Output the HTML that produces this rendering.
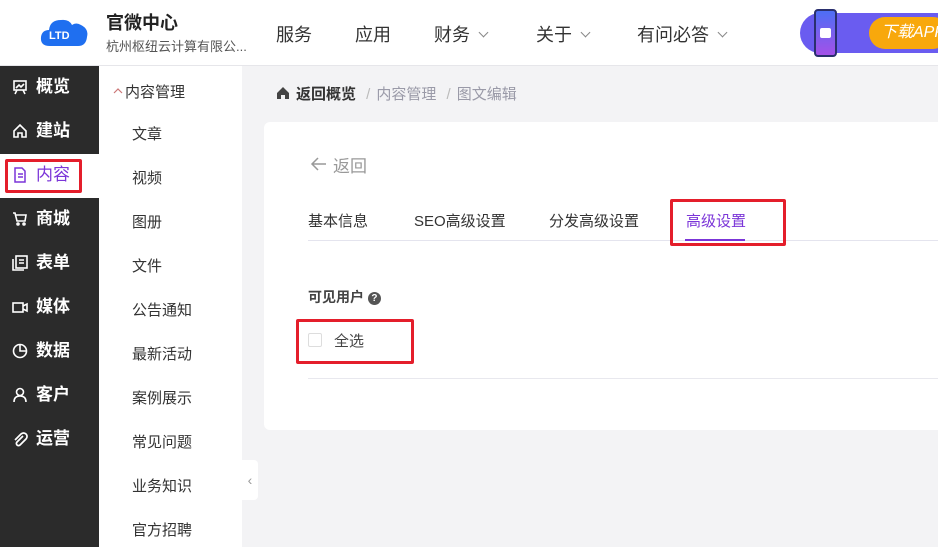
<!DOCTYPE html><html><head><meta charset="utf-8"><style>
*{margin:0;padding:0;box-sizing:border-box}
body{width:938px;height:547px;overflow:hidden;background:#f3f3f5;font-family:"Liberation Sans","Noto Sans CJK SC",sans-serif;position:relative;color:#333}
.a{position:absolute}
.hdr{left:0;top:0;width:938px;height:66px;background:#fff;border-bottom:1px solid #e6e6ea}
.nav{font-size:18px;color:#333;top:21px}
.chev{display:inline-block;width:7px;height:7px;border-right:1.3px solid #888;border-bottom:1.3px solid #888;transform:rotate(45deg);margin-left:10px;position:relative;top:-5px}
.side{left:0;top:66px;width:99px;height:481px;background:#2b2b2b}
.si{left:0;width:99px;height:44px;color:#fff;font-size:17px;font-weight:bold;line-height:44px;padding-left:36px}
.si svg{position:absolute;left:12px;top:14px}
.sub{left:99px;top:66px;width:143px;height:481px;background:#fff}
.sb{left:132px;font-size:15px;color:#333}
</style></head><body>
<div class="a hdr"></div>
<svg class="a" style="left:40px;top:16px" width="50" height="32" viewBox="0 0 50 32"><path d="M10 30 Q0 30 1 21 Q2 14 9 14 Q10 4 21 4 Q29 3 32 9 Q36 6 41 9 Q49 13 47 21 Q46 30 38 30Z" fill="#1f6ff0"/><text x="9" y="23" font-size="11" fill="#fff" font-weight="bold" font-family="Liberation Sans">LTD</text></svg>
<div class="a" style="left:106px;top:9px;font-size:18px;font-weight:bold;color:#222">官微中心</div>
<div class="a" style="left:106px;top:36px;font-size:13px;color:#555">杭州枢纽云计算有限公...</div>
<div class="a nav" style="left:276px">服务</div>
<div class="a nav" style="left:355px">应用</div>
<div class="a nav" style="left:434px">财务<span class="chev"></span></div>
<div class="a nav" style="left:536px">关于<span class="chev"></span></div>
<div class="a nav" style="left:637px">有问必答<span class="chev"></span></div>
<div class="a" style="left:800px;top:13px;width:138px;height:40px;background:#6a5cf0;border-radius:20px 0 0 20px"></div>
<div class="a" style="left:814px;top:9px;width:23px;height:48px;background:linear-gradient(#4d6ef5,#a451e8);border:2px solid #2a2f6e;border-radius:4px"></div>
<div class="a" style="left:820px;top:28px;width:11px;height:10px;background:#fff;border-radius:2px"></div>
<div class="a" style="left:869px;top:17px;width:80px;height:32px;background:#f8a80c;border-radius:16px;color:#fff;font-size:16px;font-style:italic;line-height:32px;padding-left:12px">下载APP</div>
<div class="a side"></div>
<div class="a si" style="top:65px"><svg width="16" height="16" viewBox="0 0 16 16" fill="none" stroke="#fff" stroke-width="1.6"><rect x="2" y="2" width="12" height="9"/><path d="M4 9l3-3 2 2 3-3M5 11l-2 4M11 11l2 4"/></svg>概览</div>
<div class="a si" style="top:109px"><svg width="16" height="16" viewBox="0 0 16 16" fill="none" stroke="#fff" stroke-width="1.6"><path d="M2 8l6-6 6 6v6H10v-4H6v4H2z"/></svg>建站</div>
<div class="a" style="left:0;top:154px;width:99px;height:44px;background:#fff"></div>
<div class="a" style="left:5px;top:159px;width:77px;height:34px;border:3px solid #e41e2b;border-radius:2px"></div>
<div class="a si" style="top:153px;color:#7b35d8;font-weight:normal"><svg width="16" height="16" viewBox="0 0 16 16" fill="none" stroke="#7b35d8" stroke-width="1.5"><path d="M3 1h7l3 3v11H3z M6 7h5M6 10h5"/></svg>内容</div>
<div class="a si" style="top:197px"><svg width="16" height="16" viewBox="0 0 16 16" fill="none" stroke="#fff" stroke-width="1.6"><path d="M1 2h2l2 8h8l1-6H4"/><circle cx="6" cy="13" r="1"/><circle cx="12" cy="13" r="1"/></svg>商城</div>
<div class="a si" style="top:241px"><svg width="16" height="16" viewBox="0 0 16 16" fill="none" stroke="#fff" stroke-width="1.6"><rect x="4" y="1" width="11" height="12"/><path d="M1 4v11h11M7 5h5M7 8h5"/></svg>表单</div>
<div class="a si" style="top:285px"><svg width="16" height="16" viewBox="0 0 16 16" fill="none" stroke="#fff" stroke-width="1.6"><rect x="1" y="4" width="10" height="9"/><path d="M11 7l4-2v7l-4-2"/></svg>媒体</div>
<div class="a si" style="top:329px"><svg width="16" height="16" viewBox="0 0 16 16" fill="none" stroke="#fff" stroke-width="1.6"><circle cx="8" cy="8" r="6.5"/><path d="M8 2v6h6"/></svg>数据</div>
<div class="a si" style="top:373px"><svg width="16" height="16" viewBox="0 0 16 16" fill="none" stroke="#fff" stroke-width="1.6"><circle cx="8" cy="5" r="3.5"/><path d="M2 15q0-6 6-6t6 6"/></svg>客户</div>
<div class="a si" style="top:417px"><svg width="16" height="16" viewBox="0 0 16 16" fill="none" stroke="#fff" stroke-width="1.7"><path d="M11 5L5 11a2 2 0 003 3l6-6a3.5 3.5 0 00-5-5L3 9"/></svg>运营</div>
<div class="a sub"></div>
<svg class="a" style="left:113px;top:87px" width="10" height="7" viewBox="0 0 10 7"><path d="M1 6l4-4 4 4" fill="none" stroke="#c77" stroke-width="1.2"/></svg>
<div class="a" style="left:125px;top:81px;font-size:15px;color:#333">内容管理</div>
<div class="a sb" style="top:123px">文章</div>
<div class="a sb" style="top:167px">视频</div>
<div class="a sb" style="top:211px">图册</div>
<div class="a sb" style="top:255px">文件</div>
<div class="a sb" style="top:299px">公告通知</div>
<div class="a sb" style="top:343px">最新活动</div>
<div class="a sb" style="top:387px">案例展示</div>
<div class="a sb" style="top:431px">常见问题</div>
<div class="a sb" style="top:475px">业务知识</div>
<div class="a sb" style="top:519px">官方招聘</div>
<div class="a" style="left:242px;top:460px;width:16px;height:40px;background:#fff;border-radius:0 4px 4px 0;color:#999;font-size:14px;line-height:40px;text-align:center">‹</div>
<svg class="a" style="left:276px;top:86px" width="14" height="14" viewBox="0 0 14 14"><path d="M7 1L1 7v6h4V9h4v4h4V7z" fill="#444"/></svg>
<div class="a" style="left:296px;top:83px;font-size:15px;color:#333;font-weight:bold">返回概览 <span style="color:#bbb;font-weight:normal;margin:0 6px">/</span><span style="color:#9a9aa8;font-weight:normal">内容管理</span> <span style="color:#bbb;font-weight:normal;margin:0 6px">/</span><span style="color:#9a9aa8;font-weight:normal">图文编辑</span></div>
<div class="a" style="left:264px;top:122px;width:680px;height:308px;background:#fff;border-radius:6px"></div>
<svg class="a" style="left:310px;top:156px" width="18" height="16" viewBox="0 0 18 16"><path d="M16 8H2M8 2L2 8l6 6" fill="none" stroke="#999" stroke-width="1.5"/></svg>
<div class="a" style="left:333px;top:152px;font-size:17px;color:#999">返回</div>
<div class="a" style="left:308px;top:210px;font-size:15px;color:#333">基本信息</div>
<div class="a" style="left:414px;top:210px;font-size:15px;color:#333">SEO高级设置</div>
<div class="a" style="left:549px;top:210px;font-size:15px;color:#333">分发高级设置</div>
<div class="a" style="left:686px;top:210px;font-size:15px;color:#7b35d8">高级设置</div>
<div class="a" style="left:308px;top:240px;width:630px;height:1px;background:#e4e4ee"></div>
<div class="a" style="left:685px;top:239px;width:60px;height:2px;background:#7b35d8"></div>
<div class="a" style="left:670px;top:199px;width:116px;height:47px;border:3px solid #e41e2b;border-radius:2px"></div>
<div class="a" style="left:308px;top:287px;font-size:14px;font-weight:bold;color:#444">可见用户 <span style="display:inline-block;width:13px;height:13px;border-radius:50%;background:#555;color:#fff;font-size:10px;text-align:center;line-height:13px;vertical-align:1px">?</span></div>
<div class="a" style="left:296px;top:319px;width:118px;height:45px;border:3px solid #e41e2b;border-radius:2px"></div>
<div class="a" style="left:308px;top:333px;width:14px;height:14px;border:1px solid #ddd;border-radius:2px"></div>
<div class="a" style="left:334px;top:330px;font-size:15px;color:#444">全选</div>
<div class="a" style="left:308px;top:378px;width:630px;height:1px;background:#e8e8ee"></div>
</body></html>
